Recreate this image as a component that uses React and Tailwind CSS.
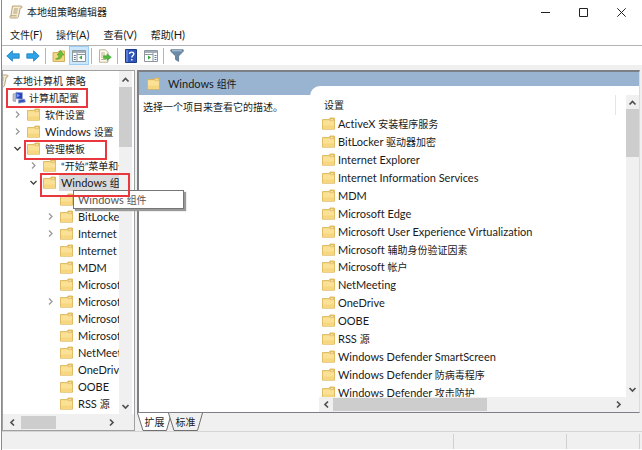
import React, { useState } from 'react';

const MENUS = ['文件(F)', '操作(A)', '查看(V)', '帮助(H)'];

const TREE = [
  { label: '软件设置', level: 1, state: 'closed' },
  { label: 'Windows 设置', level: 1, state: 'closed' },
  { label: '管理模板', level: 1, state: 'open' },
  { label: '“开始”菜单和任务栏', level: 2, state: 'closed' },
  { label: 'Windows 组件', level: 2, state: 'open', selected: true },
  { label: '', level: 3 },
  { label: 'BitLocker', level: 3, state: 'closed' },
  { label: 'Internet', level: 3, state: 'closed' },
  { label: 'Internet', level: 3 },
  { label: 'MDM', level: 3 },
  { label: 'Microsoft', level: 3 },
  { label: 'Microsoft', level: 3, state: 'closed' },
  { label: 'Microsoft', level: 3 },
  { label: 'Microsoft', level: 3 },
  { label: 'NetMeeting', level: 3 },
  { label: 'OneDrive', level: 3 },
  { label: 'OOBE', level: 3 },
  { label: 'RSS 源', level: 3 },
];

const SETTINGS = [
  'ActiveX 安装程序服务',
  'BitLocker 驱动器加密',
  'Internet Explorer',
  'Internet Information Services',
  'MDM',
  'Microsoft Edge',
  'Microsoft User Experience Virtualization',
  'Microsoft 辅助身份验证因素',
  'Microsoft 帐户',
  'NetMeeting',
  'OneDrive',
  'OOBE',
  'RSS 源',
  'Windows Defender SmartScreen',
  'Windows Defender 防病毒程序',
  'Windows Defender 攻击防护',
];

const INDENT = { 1: 'pl-[10px]', 2: 'pl-[26px]', 3: 'pl-[43px]' };

// Latin runs are set one size up from the Chinese ones
const Label = ({ text }) => (
  <span className="whitespace-pre">
    {text.split(/([\x20-\x7e]+)/).filter(Boolean).map((part, i) => (
      <span key={i} className={/^[\x20-\x7e]+$/.test(part) ? 'text-[11px]' : 'text-[10px]'}>{part}</span>
    ))}
  </span>
);

const Folder = () => (
  <svg viewBox="0 0 13 13" className="h-[13px] w-[13px] shrink-0">
    <path d="M.5 2.500h6.500l1-1.500h4.500v11.200H.5z" fill="#f6d577" stroke="#d9b152" strokeWidth=".8" />
    <path d="M1 3.500h11v8.300H1z" fill="#fbe196" />
    <path d="M1 8.500h11v3.300H1z" fill="#f7d680" />
    <path d="M8.200 2h3.400v1.700H8.200z" fill="#fff3c4" stroke="#c99f45" strokeWidth=".5" />
  </svg>
);

const ARROWS = {
  up: 'M1.5 6.5 4.5 3.5l3 3',
  down: 'M1.5 3l3 3 3-3',
  left: 'M6 1.5 3 4.5l3 3',
  right: 'M3 1.5l3 3-3 3',
};

const Arrow = ({ dir, color = '#505050', width = 1.7 }) => (
  <svg viewBox="0 0 9 9" className="h-[9px] w-[9px] shrink-0" fill="none" stroke={color} strokeWidth={width}>
    <path d={ARROWS[dir]} />
  </svg>
);

const ScrollButton = ({ dir, className }) => (
  <button aria-label={`Scroll ${dir}`} className={`flex shrink-0 items-center justify-center ${className}`}>
    <Arrow dir={dir} />
  </button>
);

const ScrollIcon = () => (
  <svg viewBox="0 0 14 14" className="h-[14px] w-[14px] shrink-0">
    <path d="M3.5 1h8.8c.9 0 1 2-.2 2h-.9L9.6 11c-.2 1.3-.9 2-2 2H1.7c-1.3 0-1.1-2.2.2-2.2z" fill="#f7ecd0" stroke="#a98d5c" strokeWidth=".8" />
    <path d="M5 4h4M4.6 6h4M4.2 8h4M1.8 10.8h5.8" stroke="#9a8a6a" strokeWidth=".8" />
  </svg>
);

const BackArrow = ({ flip }) => (
  <svg viewBox="0 0 14 12" className={`h-3 w-[14px] ${flip ? 'rotate-180' : ''}`}>
    <path d="M.8 6 6.4.8v3h6.8v4.4H6.4v3z" fill="#2fa3e6" stroke="#1a7fc0" strokeWidth=".8" strokeLinejoin="round" />
  </svg>
);

const UpFolder = () => (
  <svg viewBox="0 0 14 14" className="h-[14px] w-[14px]">
    <path d="M1 3.500h5l1-1.500h5.500v10.500H1z" fill="#f3d582" stroke="#c9a04a" strokeWidth=".8" />
    <path d="M3.500 10c2.500-.4 3.500-2 3.500-4H5.200L8.500 1.500 12 6h-2c0 3-2.500 5-6.500 4z" fill="#6cc03a" stroke="#3d8f1c" strokeWidth=".5" />
  </svg>
);

const PanelIcon = ({ flip }) => (
  <svg viewBox="0 0 14 12" className="h-3 w-[14px]">
    <path d="M.5.500h13v11H.5z" fill="#fff" stroke="#8d959d" />
    <path d="M1 1h12v2H1z" fill="#a3adb7" />
    <path d={flip ? 'M9 3v8M1 4.500h8' : 'M5 3v8M5 4.500h8'} stroke="#8d959d" />
    <path d={flip ? 'M10.500 5.500h2M10.500 7.500h2M10.500 9.500h2' : 'M1.800 5.500h2M1.800 7.500h2M1.800 9.500h2'} stroke="#5d7fa5" />
    <path d={flip ? 'M4 5.500l3 2-3 2z' : 'M10 5.500l-3 2 3 2z'} fill="#35a436" />
  </svg>
);

const ExportIcon = () => (
  <svg viewBox="0 0 14 14" className="h-[14px] w-[14px]">
    <path d="M1.500.800h6L10 3.300v9.900H1.500z" fill="#fffbe8" stroke="#a7a083" strokeWidth=".8" />
    <path d="M3 4h4M3 6h4M3 8h2M3 10.500h5" stroke="#a7a083" strokeWidth=".8" />
    <path d="M5.500 6.800H9V4.800l4.300 3.500L9 11.500v-2H5.500z" fill="#4fbb3d" stroke="#2f9323" strokeWidth=".5" />
  </svg>
);

const HelpIcon = () => (
  <svg viewBox="0 0 12 14" className="h-[14px] w-3">
    <path d="M.5.500h11v13H.5z" fill="#2f55b8" stroke="#1b3a8c" />
    <path d="M1 1h2v12H1z" fill="#5c7fd6" />
    <path d="M4.600 5c0-2.600 4.200-2.500 4.200 0 0 1.500-2 1.700-2 3.500M6.800 10v1.500" fill="none" stroke="#fff" strokeWidth="1.400" />
  </svg>
);

const FilterIcon = () => (
  <svg viewBox="0 0 14 13" className="h-[13px] w-[14px]">
    <path d="M.8.800h12.400v1.500L8.600 7v5.400L5.600 10.500V7L.8 2.300z" fill="#6a8aa8" stroke="#4e6c89" strokeWidth=".8" />
    <path d="M2 1.800h10" stroke="#b5cadb" />
  </svg>
);

const ComputerIcon = () => (
  <svg viewBox="0 0 14 13" className="h-[13px] w-[14px] shrink-0">
    <path d="M1 3l2.500-.8v8.500L1 10z" fill="#b9c0ca" stroke="#8a93a0" strokeWidth=".6" />
    <path d="M4 1.200l6.500.600v6.500L4 7.700z" fill="#2745c5" stroke="#93a4c8" strokeWidth=".8" />
    <path d="M5 2.500l3 2-3 2z" fill="#7fa2f0" />
    <path d="M6.500 9l6-1 1 3-7 1.200z" fill="#3554bf" stroke="#8fa0c8" strokeWidth=".6" />
  </svg>
);

const ToolButton = ({ label, active, children }) => (
  <button
    aria-label={label}
    className={`flex h-[19px] w-5 items-center justify-center ${active ? 'bg-[#cce6fb] outline outline-1 -outline-offset-1 outline-[#9ccdf5]' : ''}`}
  >
    {children}
  </button>
);

const Separator = () => <div className="mr-[3px] ml-[2px] h-4 w-px bg-[#b5b5b5]" />;

const TitleBar = () => (
  <header className="flex h-6 shrink-0 items-center pl-[7px]">
    <ScrollIcon />
    <h1 className="ml-1 flex-1 text-[10px]">本地组策略编辑器</h1>
    <button aria-label="Minimize" className="flex h-6 w-[38px] items-center justify-center">
      <svg viewBox="0 0 9 9" className="h-[9px] w-[9px]" stroke="#222"><path d="M0 4.500h9" /></svg>
    </button>
    <button aria-label="Maximize" className="flex h-6 w-[38px] items-center justify-center">
      <svg viewBox="0 0 9 9" className="h-[9px] w-[9px]" fill="none" stroke="#222"><path d="M.5.500h8v8h-8z" /></svg>
    </button>
    <button aria-label="Close" className="mr-[2px] flex h-6 w-[38px] items-center justify-center">
      <svg viewBox="0 0 9 9" className="h-[9px] w-[9px]" stroke="#222"><path d="M.3.300l8.400 8.400M8.700.300L.3 8.700" /></svg>
    </button>
  </header>
);

const Toolbar = () => (
  <div className="flex h-[19px] shrink-0 items-center pl-px">
    <ToolButton label="Back"><BackArrow /></ToolButton>
    <ToolButton label="Forward"><BackArrow flip /></ToolButton>
    <Separator />
    <ToolButton label="Up"><UpFolder /></ToolButton>
    <ToolButton label="Show tree" active><PanelIcon /></ToolButton>
    <Separator />
    <ToolButton label="Export"><ExportIcon /></ToolButton>
    <Separator />
    <ToolButton label="Help"><HelpIcon /></ToolButton>
    <ToolButton label="Show actions"><PanelIcon flip /></ToolButton>
    <Separator />
    <ToolButton label="Filter"><FilterIcon /></ToolButton>
  </div>
);

const TreeRow = ({ node }) => (
  <li className={`flex h-[17px] items-center ${INDENT[node.level]}`}>
    {node.state ? (
      <button aria-label={node.state === 'open' ? 'Collapse' : 'Expand'} className="flex w-[14px] shrink-0 items-center">
        <Arrow
          dir={node.state === 'open' ? 'down' : 'right'}
          color={node.state === 'open' ? '#404040' : '#9a9a9a'}
          width={1.3}
        />
      </button>
    ) : (
      <span className="w-[14px] shrink-0" />
    )}
    <Folder />
    <span className={`ml-[3px] flex h-[17px] flex-1 items-center pl-[2px] ${node.selected ? 'bg-[#d9d9d9]' : ''}`}>
      <Label text={node.label} />
    </span>
  </li>
);

const TreePanel = () => (
  <nav className="relative flex w-[133px] shrink-0 flex-col border border-[#a0a0a0] bg-white">
    <div className="flex min-h-0 flex-1 pr-[2px]">
      <ul className="min-w-0 flex-1 overflow-hidden pt-px">
        <li className="flex h-[17px] items-center gap-1">
          <span className="flex w-[6px] justify-end overflow-hidden"><ScrollIcon /></span>
          <Label text="本地计算机 策略" />
        </li>
        <li className="flex h-[17px] items-center gap-[3px] pl-[9px]">
          <ComputerIcon />
          <Label text="计算机配置" />
        </li>
        {TREE.map((node, i) => <TreeRow key={i} node={node} />)}
      </ul>
      <div className="flex w-[13px] shrink-0 flex-col bg-[#f0f0f0]">
        <ScrollButton dir="up" className="h-4" />
        <div className="h-[60px] bg-[#cdcdcd]" />
        <div className="flex-1" />
        <ScrollButton dir="down" className="h-4" />
      </div>
    </div>
    <div className="flex h-4 shrink-0 items-center bg-[#f0f0f0] pr-[15px]">
      <ScrollButton dir="left" className="w-[18px]" />
      <div className="h-[13px] w-[35px] bg-[#cdcdcd]" />
      <div className="flex-1" />
      <ScrollButton dir="right" className="w-4" />
    </div>
    <div role="tooltip" className="absolute top-[119px] left-[70px] flex h-[19px] w-[111px] items-center border border-[#767676] bg-white pl-1 text-[#575757] shadow-[2px_2px_1px_#9a9a9a]">
      <Label text="Windows 组件" />
    </div>
    <div className="absolute top-[17px] left-[3px] h-5 w-[82px] border-2 border-[#e8383d]" />
    <div className="absolute top-[69px] left-[21px] h-5 w-[83px] border-2 border-[#e8383d]" />
    <div className="absolute top-[102px] left-[37px] h-6 w-[90px] border-2 border-[#e8383d]" />
  </nav>
);

const SettingsList = () => (
  <div className="flex min-w-0 flex-1 flex-col">
    <div className="flex h-[29px] shrink-0 items-end pr-[10px] pl-[14px]">
      <h2 className="flex h-5 flex-1 items-center border-r border-[#e5e5e5] text-[10px]">设置</h2>
    </div>
    <ul className="-mb-1 flex min-h-0 flex-1 flex-col overflow-hidden pl-[12px]">
      {SETTINGS.map((name) => (
        <li key={name} className="flex min-h-0 flex-1 items-center gap-[3px]">
          <Folder />
          <Label text={name} />
        </li>
      ))}
    </ul>
    <div className="z-10 ml-[9px] flex h-[15px] shrink-0 items-center bg-[#f0f0f0]">
      <ScrollButton dir="left" className="w-[14px]" />
      <div className="h-[13px] w-1/2 bg-[#cdcdcd]" />
      <div className="flex-1" />
      <ScrollButton dir="right" className="w-4" />
    </div>
  </div>
);

const DetailPanel = () => (
  <section className="flex min-h-0 flex-1 flex-col border-t-2 border-r border-b border-l-2 border-[#7c7f84] border-r-[#dcdcdc] bg-[#99b4d1]">
    <div className="flex min-h-0 flex-1">
      <div className="flex w-[171px] shrink-0 flex-col">
        <div className="flex h-[23px] shrink-0 items-center gap-2 pl-2">
          <Folder />
          <Label text="Windows 组件" />
        </div>
        <p className="flex-1 bg-white pt-[5px] pl-1 text-[10px] leading-[14px] whitespace-nowrap">选择一个项目来查看它的描述。</p>
      </div>
      <div className="mt-[14px] flex min-w-0 flex-1 rounded-tl-[10px] bg-white">
        <SettingsList />
        <div className="mt-[9px] flex w-[13px] shrink-0 flex-col bg-[#f0f0f0]">
          <ScrollButton dir="up" className="h-[14px]" />
          <div className="h-[48px] bg-[#cdcdcd]" />
          <div className="flex-1" />
          <ScrollButton dir="down" className="mb-4 h-[14px]" />
        </div>
      </div>
    </div>
  </section>
);

const Tab = ({ label, active, onClick }) => (
  <button onClick={onClick} className="relative -mr-1 flex h-[18px] w-[35px] items-center justify-center">
    <svg viewBox="0 0 35 18" className="absolute inset-0 h-full w-full">
      <path d="M.5 0 6 17.500h23.500L34.500 0" fill={active ? '#fff' : '#f0f0f0'} stroke="#606060" strokeWidth=".9" />
    </svg>
    <span className="relative text-[10px]">{label}</span>
  </button>
);

export default function App() {
  const [tab, setTab] = useState('扩展');

  return (
    <div className="flex h-screen flex-col bg-white pl-px font-['Lato','Noto_Sans_CJK_SC',sans-serif] text-[10px] leading-none text-[#1a1a1a] [font-variant-ligatures:none]">
      <div className="flex min-h-0 flex-1 flex-col border-l border-[#8a8a8a]">
        <TitleBar />
        <div className="flex h-[22px] shrink-0 items-center gap-[14px] border-b border-[#b4b4b4] pl-2">
          {MENUS.map((menu) => (
            <button key={menu}><Label text={menu} /></button>
          ))}
        </div>
        <Toolbar />
        <main className="flex min-h-0 flex-1 gap-[2px] bg-[#f0f0f0] pt-[5px] pr-[2px]">
          <TreePanel />
          <div className="flex min-w-0 flex-1 flex-col">
            <DetailPanel />
            <div className="flex h-[18px] shrink-0">
              {['扩展', '标准'].map((name) => (
                <Tab key={name} label={name} active={tab === name} onClick={() => setTab(name)} />
              ))}
            </div>
          </div>
        </main>
        <footer className="mb-px flex h-[18px] shrink-0 border-t border-[#d5d5d5] bg-[#f0f0f0] pt-[2px] pr-[2px]">
          <div className="flex-1 border-r border-[#d0d0d0]" />
          <div className="w-[113px] border-r border-[#d0d0d0]" />
          <div className="w-[73px] border-r border-[#d0d0d0]" />
        </footer>
      </div>
    </div>
  );
}
